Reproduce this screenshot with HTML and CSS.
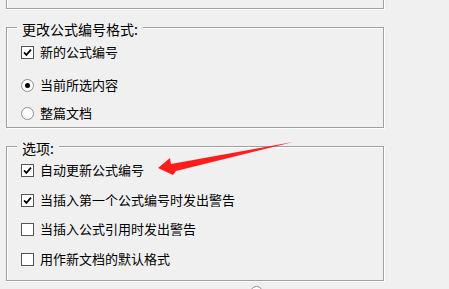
FILE: index.html
```html
<!DOCTYPE html>
<html lang="zh-CN">
<head>
<meta charset="utf-8">
<title>公式编号</title>
<link rel="stylesheet" href="styles.css">
</head>
<body>
<div class="page">
  <div class="group group-top"></div>

  <div class="group group-format">
    <div class="legend">更改公式编号格式:</div>
    <div class="row r-a">
      <span class="cb"><svg viewBox="0 0 9 9" width="9" height="9"><polyline points="1,4.4 3.4,6.9 8,1.6" fill="none" stroke="#000" stroke-width="1.7"/></svg></span>
      <span class="txt">新的公式编号</span>
    </div>
    <div class="row r-b">
      <span class="rd"><span class="dot"></span></span>
      <span class="txt">当前所选内容</span>
    </div>
    <div class="row r-c">
      <span class="rd"></span>
      <span class="txt">整篇文档</span>
    </div>
  </div>

  <div class="group group-opts">
    <div class="legend">选项:</div>
    <div class="row o-1">
      <span class="cb"><svg viewBox="0 0 9 9" width="9" height="9"><polyline points="1,4.4 3.4,6.9 8,1.6" fill="none" stroke="#000" stroke-width="1.7"/></svg></span>
      <span class="txt">自动更新公式编号</span>
    </div>
    <div class="row o-2">
      <span class="cb"><svg viewBox="0 0 9 9" width="9" height="9"><polyline points="1,4.4 3.4,6.9 8,1.6" fill="none" stroke="#000" stroke-width="1.7"/></svg></span>
      <span class="txt">当插入第一个公式编号时发出警告</span>
    </div>
    <div class="row o-3">
      <span class="cb"></span>
      <span class="txt">当插入公式引用时发出警告</span>
    </div>
    <div class="row o-4">
      <span class="cb"></span>
      <span class="txt">用作新文档的默认格式</span>
    </div>
  </div>

  <div class="peek"><span class="rd"></span></div>
</div>

<svg class="arrow" width="449" height="289" viewBox="0 0 449 289">
  <polygon points="158,168 170,158 171,164 293,142 176,171 173,175" fill="#ff1c1c"/>
</svg>
</body>
</html>
```

FILE: styles.css
```css
html, body {
  margin: 0;
  padding: 0;
  height: 100%;
  overflow: hidden;
  background: #f0f0f0;
}

body {
  font-family: "Noto Sans CJK SC", "Noto Sans", sans-serif;
  font-size: 13px;
  color: #000;
  position: relative;
}

.page {
  padding-left: 6px;
  width: 378px;
}

.group {
  border: 1px solid #a0a0a0;
  box-shadow: inset 1px 1px 0 #fff, 1px 1px 0 #fff;
  padding: 0 0 0 14px;
}

.group + .group {
  margin-top: 18px;
}

.group-top {
  margin-top: -29px;
  height: 36px;
}

.legend {
  width: fit-content;
  margin: -8px 0 0 -4px;
  padding: 0 5px;
  height: 18px;
  line-height: 18px;
  font-size: 14px;
  background: #f0f0f0;
}

.row {
  display: flex;
  align-items: center;
  gap: 6px;
  height: 20px;
}

.txt {
  line-height: 20px;
  white-space: nowrap;
}

.group-format { padding-bottom: 4px; }
.r-a { margin-top: 4px; }
.r-b { margin-top: 13px; }
.r-c { margin-top: 8px; }

.group-opts { padding-bottom: 11px; }
.o-1 { margin-top: 3px; }
.o-2 { margin-top: 10px; }
.o-3 { margin-top: 9px; }
.o-4 { margin-top: 10px; }

.cb {
  width: 13px;
  height: 13px;
  box-sizing: border-box;
  border: 1px solid #555;
  background: #fff;
  display: flex;
  align-items: center;
  justify-content: center;
  flex: none;
}

.rd {
  width: 13px;
  height: 13px;
  box-sizing: border-box;
  border: 1px solid #8c8c8c;
  border-radius: 50%;
  background: #fff;
  display: flex;
  align-items: center;
  justify-content: center;
  flex: none;
}

.dot {
  width: 5px;
  height: 5px;
  border-radius: 50%;
  background: #000;
}

.peek {
  margin-top: 5px;
  padding-left: 244px;
  display: flex;
}

.arrow {
  position: absolute;
  left: 0;
  top: 0;
  pointer-events: none;
}
```
